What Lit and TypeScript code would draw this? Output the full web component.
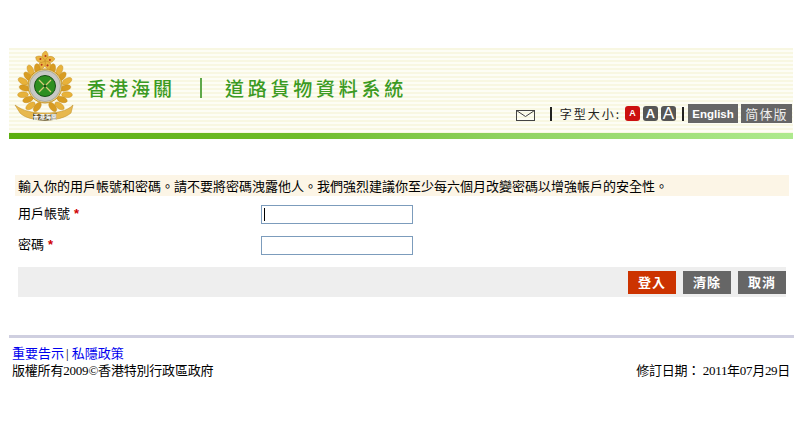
import { LitElement, html, css, svg, unsafeCSS } from "lit";
import { customElement } from "lit/decorators.js";

const CJK = unsafeCSS(`"Noto Sans CJK TC", "Liberation Sans", sans-serif`);
const SERIF = unsafeCSS(`"Liberation Serif", "Noto Sans CJK TC", serif`);

const CX = 32;
const CY = 38;

const wreath = () => {
  const out = [];
  for (const side of [-1, 1]) {
    for (let i = 0; i < 9; i++) {
      const deg = 22 + i * 17;
      const rad = (deg * Math.PI) / 180;
      const R = i % 2 ? 23 : 20.5;
      const x = CX + side * R * Math.sin(rad);
      const y = CY + R * Math.cos(rad);
      const rot = side * (90 - deg + 75);
      out.push(
        svg`<ellipse cx=${x.toFixed(1)} cy=${y.toFixed(1)} rx="2.9" ry="5.4" fill=${i % 2 ? "#e8b23a" : "#d89c22"} stroke="#c08a1e" stroke-width=".4" transform="rotate(${rot} ${x.toFixed(1)} ${y.toFixed(1)})"></ellipse>`
      );
    }
  }
  return out;
};

const petals = () => {
  const out = [];
  for (let i = 0; i < 5; i++) {
    const a = i * 72;
    out.push(
      svg`<path d="M32 11C27 7 29 2 33 1c3 3 3 7-1 10z" fill="#e8b441" stroke="#c48c22" stroke-width=".5" transform="rotate(${a} 32 11)"></path>
          <circle cx="32.5" cy="6" r="1" fill="#b8321c" transform="rotate(${a} 32 11)"></circle>`
    );
  }
  return out;
};

const logo = svg`
<svg class="logo" viewBox="0 0 65 72" width="65" height="72" aria-hidden="true">
  ${petals()}
  ${wreath()}
  <path d="M2 55c8 6 17 8 30 8s22-2 28-8l-2 8c-6 5-15 7-26 7S12 68 7 63z" fill="#e7b84e" stroke="#bb8a24" stroke-width=".5"/>
  <path d="M20 63.500c8 1 16 1 24 0v6c-8 1.500-16 1.500-24 0z" fill="#5f5230"/>
  <text x="32" y="69" text-anchor="middle" class="badge">香港海關</text>
  <circle cx="32" cy="36" r="17" fill="#e8d08a" stroke="#c69220" stroke-width="1"/>
  <circle cx="32" cy="36" r="15.500" fill="#c8c8c4" stroke="#8b8b7c" stroke-width=".5"/>
  <circle cx="32" cy="36" r="10.500" fill="#2e8f20" stroke="#174f14" stroke-width="1"/>
  <path d="M26 30l12 12M38 30L26 42" stroke="#d8cc78" stroke-width="1.300"/>
  <circle cx="32" cy="36" r="1.500" fill="#174f14"/>
</svg>`;

@customElement("app-root")
export class AppRoot extends LitElement {
  static styles = css`
    :host {
      display: block;
      width: 794px;
      height: 438px;
      overflow: hidden;
      background: #fff;
      color: #000;
      font-family: ${CJK};
      font-size: 13px;
      line-height: 14px;
      padding-top: 48px;
      box-sizing: border-box;
    }
    .page { margin-left: 9px; }
    .header {
      width: 784px;
      height: 85px;
      box-sizing: border-box;
      display: flex;
      justify-content: space-between;
      padding: 0 1px 0 4px;
      background: repeating-linear-gradient(180deg, #f8f7e2 0 2px, #fdfdf5 2px 4px);
    }
    .brand { display: flex; align-items: flex-start; padding-top: 2px; }
    .logo { display: block; flex: none; }
    .badge { font-size: 6px; fill: #fff; font-weight: 700; }
    .title {
      display: flex;
      align-items: center;
      height: 21px;
      margin: 27px 0 0 9px;
      color: #3b9a22;
      font-size: 19px;
      line-height: 21px;
      font-weight: 500;
    }
    .t1 { letter-spacing: 3px; }
    .sep { width: 2px; height: 20px; background: #5fa84a; margin: 0 23px 0 25px; }
    .t2 { letter-spacing: 3.75px; }
    .tools {
      display: flex;
      align-items: center;
      align-self: flex-end;
      height: 19px;
      margin-bottom: 10px;
      color: #222;
    }
    .mail { display: block; margin: 3px 15px 0 0; }
    .bar { width: 2px; height: 14px; background: #222; }
    .size { margin: 0 4px 0 8px; letter-spacing: 2px; font-size: 12px; white-space: nowrap; }
    .aa { display: flex; gap: 3px; margin-right: 6px; }
    .a {
      width: 15px;
      height: 15px;
      border-radius: 3px;
      background: #555;
      color: #fff;
      display: flex;
      align-items: center;
      justify-content: center;
      font-family: "Liberation Sans", sans-serif;
      font-weight: 700;
      line-height: 1;
    }
    .a.s { background: #cc1010; font-size: 9px; }
    .a.m { font-size: 13px; }
    .a.l { font-size: 17px; font-weight: 400; }
    .lang {
      background: #666;
      color: #fff;
      height: 19px;
      display: flex;
      align-items: center;
      justify-content: center;
    }
    .en { width: 50px; font-family: "Liberation Sans", sans-serif; font-size: 11.5px; font-weight: 700; margin-left: 4px; }
    .zh { width: 51px; font-size: 13px; letter-spacing: 1.2px; color: #eee; margin-left: 3px; }
    .stripe {
      width: 784px;
      height: 6px;
      background: linear-gradient(90deg, #5bae10 0%, #70bd2c 38%, #8fd260 63%, #aeea8e 100%);
    }
    .main { margin: 36px 0 0 6px; width: 774px; }
    .msg {
      background: #fcf5e6;
      height: 21px;
      line-height: 21px;
      padding-left: 3px;
      white-space: nowrap;
    }
    .row {
      display: grid;
      grid-template-columns: 243px 152px;
      align-items: center;
      margin-left: 3px;
      height: 19px;
    }
    .r1 { margin-top: 9px; }
    .r2 { margin-top: 12px; }
    .row label { display: block; margin-top: -2px; }
    .req { color: #d00000; font-family: "Liberation Sans", sans-serif; font-weight: 700; margin-left: 1px; }
    .field {
      box-sizing: border-box;
      width: 152px;
      height: 19px;
      border: 1px solid #7c9cbc;
      background: #fff;
      display: flex;
      align-items: center;
      padding-left: 2px;
    }
    .caret { width: 1px; height: 13px; background: #000; }
    .actions {
      margin: 12px 0 0 3px;
      width: 768px;
      height: 30px;
      box-sizing: border-box;
      background: #eeeeee;
      display: flex;
      justify-content: flex-end;
      align-items: center;
      gap: 7px;
    }
    .btn {
      width: 48px;
      height: 23px;
      background: #666;
      color: #fff;
      font-weight: 700;
      letter-spacing: 1px;
      display: flex;
      align-items: center;
      justify-content: center;
    }
    .btn.go { background: #cc3300; }
    .rule { width: 785px; height: 3px; background: #cfcfe0; margin-top: 38px; }
    .foot { margin: 7px 4px 0 3px; font-family: ${SERIF}; line-height: 17px; }
    .foot a { color: #0000ee; text-decoration: none; }
    .pipe { margin: 0 3px 0 2px; }
    .copy { display: flex; justify-content: space-between; }
    .own { letter-spacing: -0.2px; }
    .date { letter-spacing: -0.3px; }
  `;

  render() {
    return html`<div class="page">
      <div class="header">
        <div class="brand">
          ${logo}
          <div class="title">
            <span class="t1">香港海關</span><span class="sep"></span><span class="t2">道路貨物資料系統</span>
          </div>
        </div>
        <div class="tools">
          <svg class="mail" width="19" height="11" viewBox="0 0 19 11" aria-hidden="true" fill="none" stroke="#444" stroke-width="1">
            <rect x=".5" y=".5" width="18" height="10"></rect><path d="M.5 .5L9.500 6.500 18.500 .5"></path>
          </svg>
          <span class="bar"></span>
          <span class="size">字型大小:</span>
          <div class="aa"><span class="a s">A</span><span class="a m">A</span><span class="a l">A</span></div>
          <span class="bar"></span>
          <span class="lang en">English</span>
          <span class="lang zh">简体版</span>
        </div>
      </div>
      <div class="stripe"></div>
      <div class="main">
        <div class="msg">輸入你的用戶帳號和密碼。請不要將密碼洩露他人。我們強烈建議你至少每六個月改變密碼以增強帳戶的安全性。</div>
        <div class="row r1"><label>用戶帳號 <span class="req">*</span></label><div class="field"><span class="caret"></span></div></div>
        <div class="row r2"><label>密碼 <span class="req">*</span></label><div class="field"></div></div>
        <div class="actions">
          <span class="btn go">登入</span><span class="btn">清除</span><span class="btn">取消</span>
        </div>
      </div>
      <div class="rule"></div>
      <div class="foot">
        <div><a href="#">重要告示</a><span class="pipe">|</span><a href="#">私隱政策</a></div>
        <div class="copy"><span class="own">版權所有2009©香港特別行政區政府</span><span class="date">修訂日期： 2011年07月29日</span></div>
      </div>
    </div>`;
  }
}
